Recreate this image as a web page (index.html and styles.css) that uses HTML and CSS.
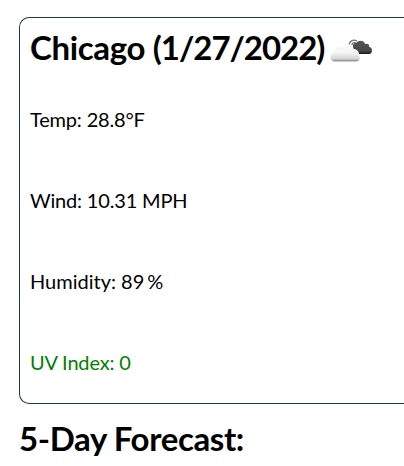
FILE: index.html
```
<!DOCTYPE html>
<html lang="en">
<head>
<meta charset="utf-8">
<title>Weather</title>
<link rel="stylesheet" href="styles.css">
</head>
<body>
<section class="today">
<h2 class="city"><span class="name">Chicago <span class="date">(1/27/2022)</span></span><svg class="icon" viewBox="0 0 50 50"><defs><linearGradient id="c" x1="0" y1="0" x2="0" y2="1"><stop offset="0" stop-color="#fcfcfc"/><stop offset=".5" stop-color="#f5f5f5"/><stop offset=".85" stop-color="#d4d4d4"/><stop offset="1" stop-color="#777"/></linearGradient><linearGradient id="d" x1="0" y1="0" x2="0" y2="1"><stop offset="0" stop-color="#555"/><stop offset=".75" stop-color="#484848"/><stop offset="1" stop-color="#181818"/></linearGradient></defs><path fill="none" stroke="#777" stroke-width="1.3" d="M22 20c0-5 4-7 8-5M25 19c0-2 2-3 4-2"/><path fill="url(#d)" d="M26 20c0-3 2-3 3-3 3-3 8-3 9 1 3-1 5 1 4 3 4 0 4 7 0 7H32c0-3-3-5-6-5z"/><path fill="url(#c)" stroke="#e4e4e4" stroke-width=".4" d="M8 35.500c-6 0-6-8 0-9 0-4 4-6 7-4 3-7 12-5 12 3 4 0 5 3 4 4 3 1 2 6-2 6z"/></svg></h2>
<p class="stat">Temp: 28.8°F</p>
<p class="stat">Wind: 10.31 MPH</p>
<p class="stat humidity">Humidity: 89<span class="percent">%</span></p>
<p class="stat uv">UV Index: 0</p>
</section>
<h2 class="forecast">5-Day Forecast:</h2>
</body>
</html>
```
FILE: styles.css
```
body { margin: 0; padding: 17px 0 0 19px; background: #fff; color: #000; font-family: Lato, sans-serif; }
.today { box-sizing: border-box; height: 387px; padding: 9px 0 0 10px; border: 1px solid #1f3556; border-right: 0; border-radius: 10px 0 0 10px; }
.city, .forecast { margin: 0; font-size: 33px; line-height: 40px; font-weight: 700; white-space: nowrap; }
.city { display: flex; align-items: center; height: 40px; }
.name { width: 297px; letter-spacing: -.35px; }
.date { letter-spacing: -1.03px; }
.icon { flex: none; width: 50px; height: 50px; margin-top: 8px; }
.stat { margin: 0 0 57px; font-size: 20px; line-height: 24px; letter-spacing: -.18px; }
.city + .stat { margin-top: 40px; }
.humidity { letter-spacing: 0; }
.percent { margin-left: 3px; }
.uv { color: green; }
.forecast { margin-top: 14px; letter-spacing: -.37px; }
```
